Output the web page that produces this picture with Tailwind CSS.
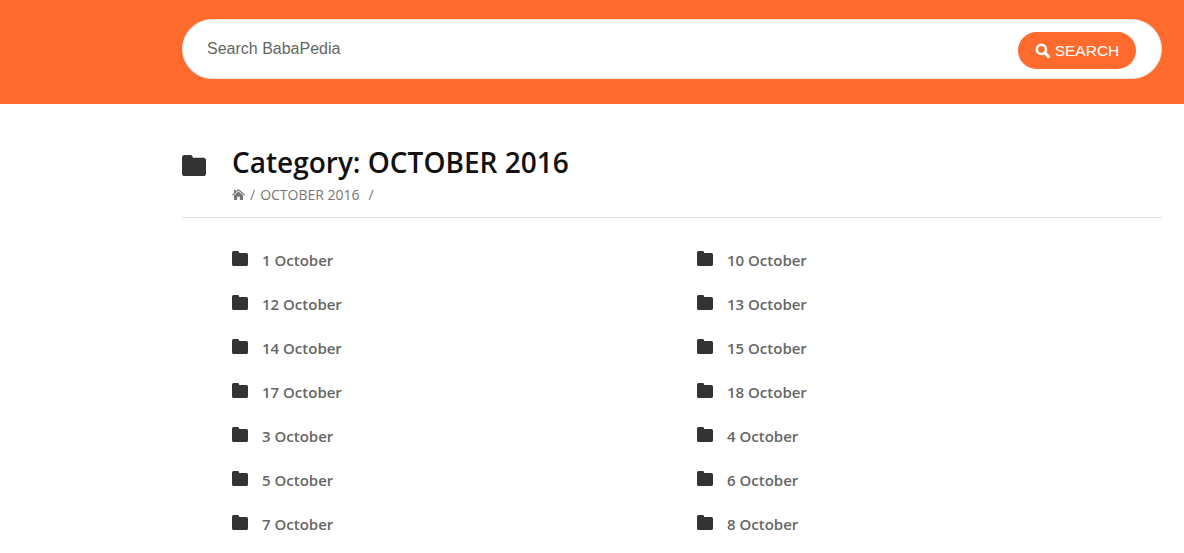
<!DOCTYPE html>
<html lang="en">
<head>
<meta charset="UTF-8">
<meta name="viewport" content="width=device-width, initial-scale=1.0">
<title>Category: OCTOBER 2016</title>
<script src="https://cdn.jsdelivr.net/npm/@tailwindcss/browser@4"></script>
</head>
<body class="bg-white font-['Open_Sans',sans-serif] h-[553px] overflow-hidden">

<!-- Header -->
<header class="h-[104px] bg-[#ff6b2d] pl-[182px] pr-[22px] pt-[19px]">
  <div class="h-[60px] rounded-[30px] bg-white border border-[#e5e5e5] flex items-center justify-between pl-[24px] pr-[25px]">
    <span class="font-['Liberation_Sans',sans-serif] text-[16px] text-[#666666]">Search BabaPedia</span>
    <button class="w-[118px] h-[37px] mt-[2px] rounded-[19px] bg-[#ff6b2d] text-white font-['Liberation_Sans',sans-serif] text-[15.5px] flex items-center justify-center gap-[5px]">
      <svg class="w-[15px] h-[15px] mt-[1px]" viewBox="0 0 15 15" fill="none" stroke="currentColor"><circle cx="6.4" cy="6.4" r="4.6" stroke-width="2.6"/><path d="M10 10L13.6 13.6" stroke-width="3" stroke-linecap="round"/></svg>
      <span class="mt-[1px]">SEARCH</span>
    </button>
  </div>
</header>

<!-- Page title -->
<section class="ml-[182px] mr-[22px] h-[114px] border-b border-[#e3e3e3] flex">
  <svg class="w-[24px] h-[21px] mt-[51px] shrink-0 text-[#333333]" viewBox="0 0 24 20" preserveAspectRatio="none" fill="currentColor"><path d="M2.5 0H8.5C9.8 0 10.5 .8 10.8 2.5H21.5C23 2.5 24 3.5 24 5V17.5C24 19 23 20 21.5 20H2.5C1 20 0 19 0 17.5V2.5C0 1 1 0 2.5 0Z"/></svg>
  <div class="ml-[26px] pt-[40px]">
    <h1 class="text-[28px] leading-[37px] font-semibold text-[#111111]">Category: OCTOBER 2016</h1>
    <div class="mt-[4px] flex items-center text-[14px] leading-[19px] text-[#777777]">
      <svg class="w-[13px] h-[11px]" viewBox="0 0 13 11" fill="currentColor"><path d="M6.5 0L13 5.6L12.2 6.4L6.5 1.6L.8 6.4L0 5.6L2 3.9V.8H3.8V2.4Z"/><path d="M6.5 2.6L11 6.3V11H7.8V7.7H5.2V11H2V6.3Z"/></svg>
      <span class="ml-[5px]">/</span>
      <span class="ml-[5px]">OCTOBER 2016</span>
      <span class="ml-[9px]">/</span>
    </div>
  </div>
</section>

<!-- Sub categories -->
<ul class="ml-[232px] grid grid-cols-[465px_1fr] auto-rows-[44px] pt-[20px]">
  <li class="flex items-center h-[44px] text-[15px] font-semibold text-[#666666]"><svg class="w-[16px] h-[15px] mb-[3px] text-[#333333]" viewBox="0 0 24 20" preserveAspectRatio="none" fill="currentColor"><path d="M2.5 0H8.5C9.8 0 10.5 .8 10.8 2.5H21.5C23 2.5 24 3.5 24 5V17.5C24 19 23 20 21.5 20H2.5C1 20 0 19 0 17.5V2.5C0 1 1 0 2.5 0Z"/></svg><span class="ml-[14px]">1 October</span></li>
  <li class="flex items-center h-[44px] text-[15px] font-semibold text-[#666666]"><svg class="w-[16px] h-[15px] mb-[3px] text-[#333333]" viewBox="0 0 24 20" preserveAspectRatio="none" fill="currentColor"><path d="M2.5 0H8.5C9.8 0 10.5 .8 10.8 2.5H21.5C23 2.5 24 3.5 24 5V17.5C24 19 23 20 21.5 20H2.5C1 20 0 19 0 17.5V2.5C0 1 1 0 2.5 0Z"/></svg><span class="ml-[14px]">10 October</span></li>
  <li class="flex items-center h-[44px] text-[15px] font-semibold text-[#666666]"><svg class="w-[16px] h-[15px] mb-[3px] text-[#333333]" viewBox="0 0 24 20" preserveAspectRatio="none" fill="currentColor"><path d="M2.5 0H8.5C9.8 0 10.5 .8 10.8 2.5H21.5C23 2.5 24 3.5 24 5V17.5C24 19 23 20 21.5 20H2.5C1 20 0 19 0 17.5V2.5C0 1 1 0 2.5 0Z"/></svg><span class="ml-[14px]">12 October</span></li>
  <li class="flex items-center h-[44px] text-[15px] font-semibold text-[#666666]"><svg class="w-[16px] h-[15px] mb-[3px] text-[#333333]" viewBox="0 0 24 20" preserveAspectRatio="none" fill="currentColor"><path d="M2.5 0H8.5C9.8 0 10.5 .8 10.8 2.5H21.5C23 2.5 24 3.5 24 5V17.5C24 19 23 20 21.5 20H2.5C1 20 0 19 0 17.5V2.5C0 1 1 0 2.5 0Z"/></svg><span class="ml-[14px]">13 October</span></li>
  <li class="flex items-center h-[44px] text-[15px] font-semibold text-[#666666]"><svg class="w-[16px] h-[15px] mb-[3px] text-[#333333]" viewBox="0 0 24 20" preserveAspectRatio="none" fill="currentColor"><path d="M2.5 0H8.5C9.8 0 10.5 .8 10.8 2.5H21.5C23 2.5 24 3.5 24 5V17.5C24 19 23 20 21.5 20H2.5C1 20 0 19 0 17.5V2.5C0 1 1 0 2.5 0Z"/></svg><span class="ml-[14px]">14 October</span></li>
  <li class="flex items-center h-[44px] text-[15px] font-semibold text-[#666666]"><svg class="w-[16px] h-[15px] mb-[3px] text-[#333333]" viewBox="0 0 24 20" preserveAspectRatio="none" fill="currentColor"><path d="M2.5 0H8.5C9.8 0 10.5 .8 10.8 2.5H21.5C23 2.5 24 3.5 24 5V17.5C24 19 23 20 21.5 20H2.5C1 20 0 19 0 17.5V2.5C0 1 1 0 2.5 0Z"/></svg><span class="ml-[14px]">15 October</span></li>
  <li class="flex items-center h-[44px] text-[15px] font-semibold text-[#666666]"><svg class="w-[16px] h-[15px] mb-[3px] text-[#333333]" viewBox="0 0 24 20" preserveAspectRatio="none" fill="currentColor"><path d="M2.5 0H8.5C9.8 0 10.5 .8 10.8 2.5H21.5C23 2.5 24 3.5 24 5V17.5C24 19 23 20 21.5 20H2.5C1 20 0 19 0 17.5V2.5C0 1 1 0 2.5 0Z"/></svg><span class="ml-[14px]">17 October</span></li>
  <li class="flex items-center h-[44px] text-[15px] font-semibold text-[#666666]"><svg class="w-[16px] h-[15px] mb-[3px] text-[#333333]" viewBox="0 0 24 20" preserveAspectRatio="none" fill="currentColor"><path d="M2.5 0H8.5C9.8 0 10.5 .8 10.8 2.5H21.5C23 2.5 24 3.5 24 5V17.5C24 19 23 20 21.5 20H2.5C1 20 0 19 0 17.5V2.5C0 1 1 0 2.5 0Z"/></svg><span class="ml-[14px]">18 October</span></li>
  <li class="flex items-center h-[44px] text-[15px] font-semibold text-[#666666]"><svg class="w-[16px] h-[15px] mb-[3px] text-[#333333]" viewBox="0 0 24 20" preserveAspectRatio="none" fill="currentColor"><path d="M2.5 0H8.5C9.8 0 10.5 .8 10.8 2.5H21.5C23 2.5 24 3.5 24 5V17.5C24 19 23 20 21.5 20H2.5C1 20 0 19 0 17.5V2.5C0 1 1 0 2.5 0Z"/></svg><span class="ml-[14px]">3 October</span></li>
  <li class="flex items-center h-[44px] text-[15px] font-semibold text-[#666666]"><svg class="w-[16px] h-[15px] mb-[3px] text-[#333333]" viewBox="0 0 24 20" preserveAspectRatio="none" fill="currentColor"><path d="M2.5 0H8.5C9.8 0 10.5 .8 10.8 2.5H21.5C23 2.5 24 3.5 24 5V17.5C24 19 23 20 21.5 20H2.5C1 20 0 19 0 17.5V2.5C0 1 1 0 2.5 0Z"/></svg><span class="ml-[14px]">4 October</span></li>
  <li class="flex items-center h-[44px] text-[15px] font-semibold text-[#666666]"><svg class="w-[16px] h-[15px] mb-[3px] text-[#333333]" viewBox="0 0 24 20" preserveAspectRatio="none" fill="currentColor"><path d="M2.5 0H8.5C9.8 0 10.5 .8 10.8 2.5H21.5C23 2.5 24 3.5 24 5V17.5C24 19 23 20 21.5 20H2.5C1 20 0 19 0 17.5V2.5C0 1 1 0 2.5 0Z"/></svg><span class="ml-[14px]">5 October</span></li>
  <li class="flex items-center h-[44px] text-[15px] font-semibold text-[#666666]"><svg class="w-[16px] h-[15px] mb-[3px] text-[#333333]" viewBox="0 0 24 20" preserveAspectRatio="none" fill="currentColor"><path d="M2.5 0H8.5C9.8 0 10.5 .8 10.8 2.5H21.5C23 2.5 24 3.5 24 5V17.5C24 19 23 20 21.5 20H2.5C1 20 0 19 0 17.5V2.5C0 1 1 0 2.5 0Z"/></svg><span class="ml-[14px]">6 October</span></li>
  <li class="flex items-center h-[44px] text-[15px] font-semibold text-[#666666]"><svg class="w-[16px] h-[15px] mb-[3px] text-[#333333]" viewBox="0 0 24 20" preserveAspectRatio="none" fill="currentColor"><path d="M2.5 0H8.5C9.8 0 10.5 .8 10.8 2.5H21.5C23 2.5 24 3.5 24 5V17.5C24 19 23 20 21.5 20H2.5C1 20 0 19 0 17.5V2.5C0 1 1 0 2.5 0Z"/></svg><span class="ml-[14px]">7 October</span></li>
  <li class="flex items-center h-[44px] text-[15px] font-semibold text-[#666666]"><svg class="w-[16px] h-[15px] mb-[3px] text-[#333333]" viewBox="0 0 24 20" preserveAspectRatio="none" fill="currentColor"><path d="M2.5 0H8.5C9.8 0 10.5 .8 10.8 2.5H21.5C23 2.5 24 3.5 24 5V17.5C24 19 23 20 21.5 20H2.5C1 20 0 19 0 17.5V2.5C0 1 1 0 2.5 0Z"/></svg><span class="ml-[14px]">8 October</span></li>
</ul>

</body>
</html>
